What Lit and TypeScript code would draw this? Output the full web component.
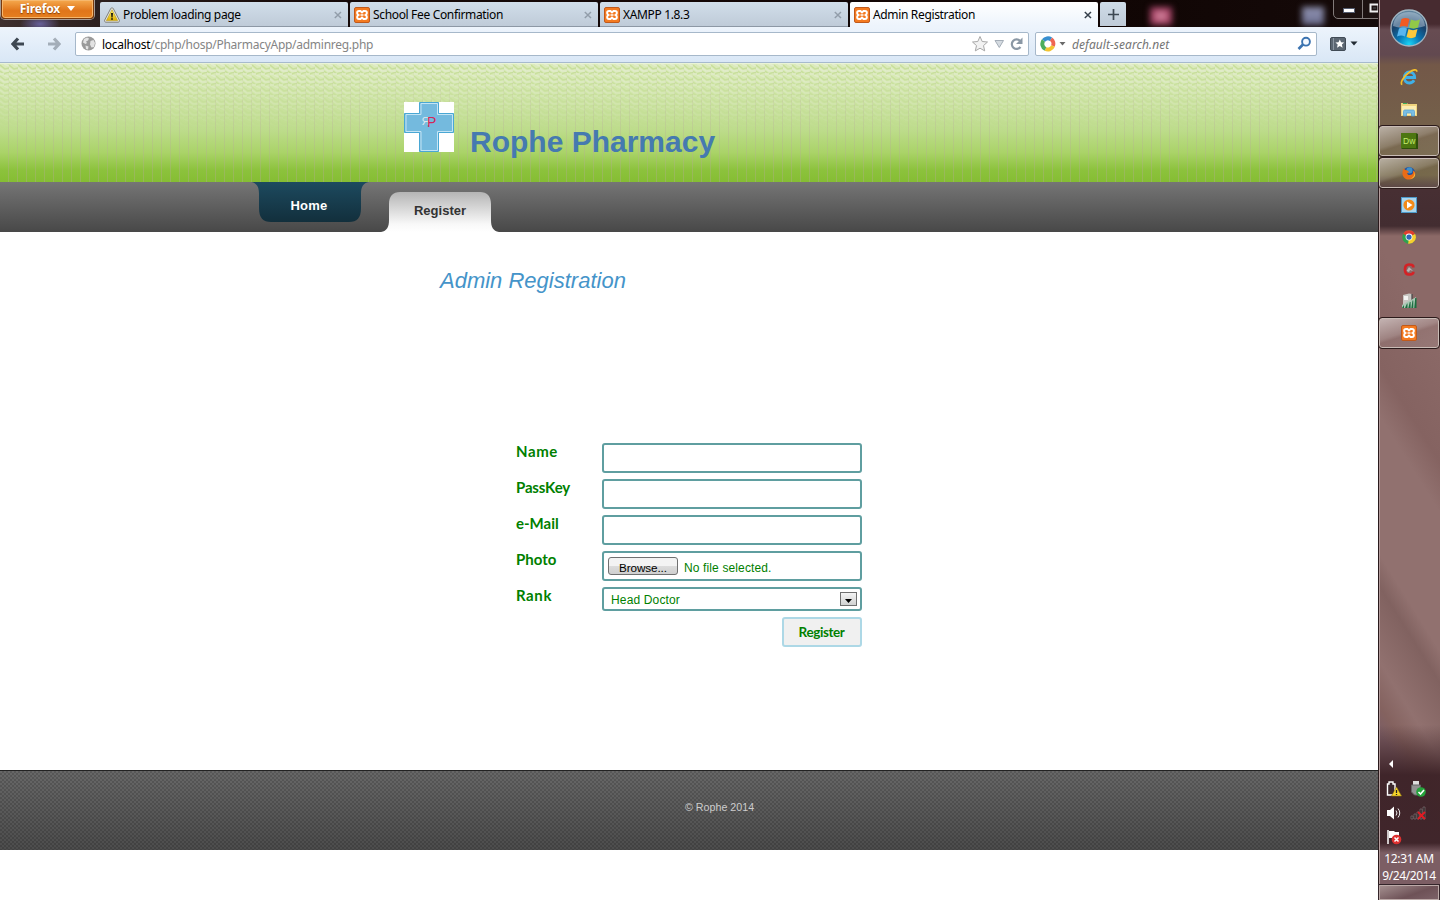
import { LitElement, html, css, svg } from "lit";
import { customElement, property } from "lit/decorators.js";

const xampp = html`<svg width="16" height="16" viewBox="0 0 16 16">
  <rect x=".5" y=".5" width="15" height="15" rx="1.5" fill="#f47a20" stroke="#c05a1c"/>
  <path d="M5 4h1.500L8 5.500 9.500 4H11c1.400 0 1.900.8 1.900 1.900S12 7.600 11.500 8c.5.400 1.400 1 1.400 2.100S12.400 12 11 12H9.500L8 10.500 6.500 12H5c-1.400 0-1.900-.8-1.900-1.900S4 8.400 4.500 8C4 7.600 3.100 7 3.100 5.900S3.600 4 5 4z" fill="none" stroke="#fff" stroke-width="1.900"/>
  <path d="M6.500 8h3" stroke="#fff" stroke-width="1.500"/>
</svg>`;

const warning = html`<svg width="16" height="16" viewBox="0 0 16 16">
  <defs><linearGradient id="wg" x2="0" y2="1"><stop stop-color="#fff27a"/><stop offset="1" stop-color="#dfae00"/></linearGradient></defs>
  <path d="M8 .8c.6 0 1 .3 1.300.8l6 11.500c.5 1-.1 2.100-1.300 2.100H2C.8 15.200.2 14.100.7 13.100l6-11.500C7 1.100 7.400.8 8 .8z" fill="#e4e4e0" stroke="#77776f" stroke-width=".9"/>
  <path d="M8 2.800l5.600 10.800H2.400z" fill="url(#wg)" stroke="#b99b12" stroke-width=".6"/>
  <path d="M7 6h2l-.4 4.400H7.400zM7.100 11.200h1.800v1.600H7.100z" fill="#1a1a10"/>
</svg>`;

@customElement("browser-tab")
class BrowserTab extends LitElement {
  @property() label = "";
  @property() icon = "xampp";
  @property({ type: Boolean, reflect: true }) active = false;
  static styles = css`
    :host { display: flex; align-items: center; box-sizing: border-box; width: 248px; height: 25px;
      padding: 1px 6px 0 4px; background: linear-gradient(#d1deea, #bfcbd8); border-bottom: 1px solid #8d98a5;
      border-radius: 2px 2px 0 0; font: 12px "Noto Sans", sans-serif; color: #000; }
    :host([active]) { background: linear-gradient(#fff, #edf4fc); border-bottom-color: #edf4fc; }
    .label { flex: 1; margin-left: 3px; white-space: nowrap; letter-spacing: -.34px; }
    .close { opacity: .36; display: block; margin-top: 1px; }
    :host([active]) .close { opacity: 1; }
  `;
  render() {
    return html`${this.icon === "warning" ? warning : xampp}
      <span class="label">${this.label}</span>
      <svg class="close" width="8" height="8" viewBox="0 0 8 8"><path d="M.8 1l6.200 6M7 1L.8 7" stroke="#36404c" stroke-width="1.500"/></svg>`;
  }
}

@customElement("browser-chrome")
class BrowserChrome extends LitElement {
  static styles = css`
    :host { display: block; font-family: "Noto Sans", sans-serif; }
    svg { display: block; flex: none; }
    .strip { position: relative; display: flex; height: 27px; overflow: hidden;
      background: radial-gradient(ellipse 20px 10px at 40px 24px, #67609a, transparent),
        linear-gradient(90deg, #3e302f 0, #2c201f 95px, #160a09 300px, #100504 1100px, #150a09); }
    .glow { position: absolute; top: 7px; width: 22px; height: 18px; filter: blur(3px); }
    .pink { left: 1150px; background: radial-gradient(#dc9aae 0, #ab4668 55%, #8a3558); }
    .slate { left: 1302px; background: linear-gradient(#9295b4, #6b6d8e); }
    .firefox { box-sizing: border-box; width: 93px; height: 19px; margin-left: 1px; margin-right: 6px; display: flex;
      align-items: center; justify-content: center; gap: 7px; padding-bottom: 1px; border: 1px solid #7a3a0c; border-top: 0;
      border-radius: 0 0 4px 4px; background: linear-gradient(#f5a94e, #e0751a 60%, #e57f20); color: #fff;
      box-shadow: inset 0 0 0 1px #f6b76c, 0 0 0 1px #a49a94; font-weight: 700; font-size: 12px; letter-spacing: -.15px; text-shadow: 0 1px 1px #8a4208; }
    .tabs { display: flex; gap: 2px; padding-top: 2px; }
    .plus { width: 26px; height: 24px; background: linear-gradient(#cfdce8, #bfcbd8); display: grid; place-items: center; border-radius: 2px 2px 0 0; }
    .controls { position: absolute; left: 1333px; top: -4px; display: flex; border: 1px solid #827b7a; border-radius: 0 0 4px 5px; height: 21px; width: 60px; background: #1d1211; }
    .controls .min { width: 29px; border-right: 1px solid #827b7a; display: grid; place-items: center; padding: 5px 0 0 1px; box-sizing: border-box; }
    .controls .max { padding: 6px 0 0 6px; }
    .bar { box-sizing: border-box; display: flex; align-items: center; height: 36px; padding: 0 0 2px 11px;
      background: linear-gradient(#edf4fc, #d9e7f6); border-bottom: 1px solid #a7bacd; }
    .forward { margin-left: 22px; opacity: .38; }
    .field { box-sizing: border-box; height: 24px; display: flex; align-items: center; background: #fff; border: 1px solid #a6b8ca; border-radius: 2px; font-size: 12px; }
    .url { width: 954px; margin-left: 14px; padding: 0 5px; color: #858585; }
    .url span { flex: 1; margin-left: 6px; padding-top: 1px; letter-spacing: -.27px; }
    .url b { font-weight: 400; color: #000; }
    .search { width: 282px; margin-left: 6px; padding: 0 4px; color: #747474; }
    .search em { flex: 1; margin-left: 6px; padding-top: 1px; letter-spacing: .06px; }
    .drop { margin-left: 3px; }
    .mark { margin-left: 13px; }
    .caret { margin-left: 4px; }
  `;
  render() {
    const arrow = svg`<path d="M7 1.500L2 7l5 5.500M2.500 7H13" fill="none" stroke="#3e4852" stroke-width="3.200"/>`;
    return html`
      <div class="strip">
        <div class="glow pink"></div><div class="glow slate"></div>
        <div class="firefox">Firefox <svg width="8" height="5"><path d="M0 0h8L4 5z" fill="#fff"/></svg></div>
        <div class="tabs">
          <browser-tab label="Problem loading page" icon="warning"></browser-tab>
          <browser-tab label="School Fee Confirmation"></browser-tab>
          <browser-tab label="XAMPP 1.8.3"></browser-tab>
          <browser-tab label="Admin Registration" active></browser-tab>
          <div class="plus"><svg width="11" height="11"><path d="M5.500 0v11M0 5.500h11" stroke="#3d4853" stroke-width="1.700"/></svg></div>
        </div>
        <div class="controls">
          <div class="min"><svg width="12" height="5"><rect x=".5" y=".5" width="11" height="4" fill="#fff" stroke="#555d70"/></svg></div>
          <div class="max"><svg width="12" height="10"><path d="M1.500 1.500h8v7h-8z" fill="none" stroke="#eee" stroke-width="2"/><rect x="4" y="4" width="3" height="2" fill="#333"/></svg></div>
        </div>
      </div>
      <div class="bar">
        <svg width="14" height="14">${arrow}</svg>
        <svg class="forward" width="14" height="14" viewBox="0 0 14 14"><g transform="translate(14 0) scale(-1 1)">${arrow}</g></svg>
        <div class="field url">
          <svg width="15" height="15" viewBox="0 0 15 15"><circle cx="7.500" cy="7.500" r="7" fill="#9a9a9a"/><path d="M3 3l3-1.500 2 1-1 2-2 1 1 1.500-1.500 1L2 6.500zM9.500 5l3-1 1.500 3-1 4-2.500.5L9 8.500zM4.500 9.500l3 1-.5 3-2-.5z" fill="#e3e3e3"/></svg>
          <span><b>localhost</b>/cphp/hosp/PharmacyApp/adminreg.php</span>
          <svg width="52" height="18" viewBox="0 0 52 18">
            <path d="M9 1.500l2.200 5 5.300.5-4 3.600 1.200 5.300L9 13.200l-4.700 2.700 1.200-5.300-4-3.600 5.300-.5z" fill="#f2f2f2" stroke="#a8a8a8"/>
            <path d="M24 5.500h8.500l-4.200 7z" fill="#d5dbe1" stroke="#a4adb7"/>
            <path d="M49.500 12A4.800 4.800 0 1 1 49 5.700" fill="none" stroke="#8b98a5" stroke-width="2.200"/><path d="M51.500 2.500V9H45z" fill="#8b98a5"/>
          </svg>
        </div>
        <div class="field search">
          <svg width="16" height="16" viewBox="0 0 16 16" fill="none" stroke-width="4">
            <path d="M3.500 4.500A5.600 5.600 0 0 1 11 3.200" stroke="#388fd0"/><path d="M11 3.200A5.600 5.600 0 0 1 13 10" stroke="#ef6654"/>
            <path d="M13 10A5.600 5.600 0 0 1 5.500 13" stroke="#f3c431"/><path d="M5.500 13A5.600 5.600 0 0 1 3.500 4.500" stroke="#4cae5b"/></svg>
          <svg class="drop" width="7" height="4"><path d="M.5 0h6L3.500 3.500z" fill="#6a6a6a"/></svg>
          <em>default-search.net</em>
          <svg width="15" height="15" viewBox="0 0 15 15"><circle cx="9" cy="5.700" r="3.900" fill="#f4f9ff" stroke="#3b73b0" stroke-width="1.900"/><path d="M6 8.500L1.500 13" stroke="#3b73b0" stroke-width="2.600"/></svg>
        </div>
        <svg class="mark" width="16" height="14" viewBox="0 0 16 14"><rect x=".5" y=".5" width="15" height="13" rx="1.500" fill="#5b6672" stroke="#414b56"/><path d="M3.500 1v12" stroke="#8b96a2"/><path d="M9.800 2.500l1.300 2.800 3.100.3-2.300 2 .7 3.100-2.800-1.600L7 10.700l.7-3.100-2.300-2 3.100-.3z" fill="#fff"/></svg>
        <svg class="caret" width="8" height="5"><path d="M.5.500h7L4 4.500z" fill="#222b33"/></svg>
      </div>`;
  }
}

@customElement("pharmacy-page")
class PharmacyPage extends LitElement {
  static styles = css`
    :host { display: flex; flex-direction: column; flex: 1; background: #fff; font-family: "Liberation Sans", Arial, sans-serif; }
    svg { display: block; flex: none; }
    header { position: relative; box-sizing: border-box; height: 119px; padding: 38px 0 0 404px; display: flex; align-items: flex-start;
      border-top: 1px solid #eaf4d6;
      background: linear-gradient(#dcebbc, #d5e8b1 16%, #cae29f 36%, #bddc8b 56%, #aad368 75%, #8cc23c 90%, #85bd33); }
    .texture { position: absolute; inset: 0; }
    header > .logo { position: relative; }
    h1 { position: relative; margin: 23px 0 0 16px; font-size: 30px; line-height: 34px; color: #457ab0; white-space: nowrap; }
    nav { height: 50px; display: flex; background: linear-gradient(#757575, #484848); }
    .tab { width: 118px; height: 40px; display: grid; font: 700 13px/1 "Liberation Sans", Arial, sans-serif; }
    .tab > * { grid-area: 1 / 1; }
    .tab span { align-self: center; justify-self: center; }
    .home { margin-left: 251px; color: #fff; }
    .home span { padding: 6px 2px 0 0; letter-spacing: .2px; }
    .register { margin: 10px 0 0 12px; color: #333; }
    .register span { padding-bottom: 4px; }
    main { height: 538px; box-sizing: border-box; padding: 36px 0 0 440px; }
    h2 { margin: 0; font: italic 400 22px/26px "Liberation Sans", Arial, sans-serif; color: #4594c9; }
    form { display: grid; grid-template-columns: 86px 260px; row-gap: 6px; margin: 149px 0 0 76px; width: 346px; }
    label { font: 700 15px/16px Lato, sans-serif; color: #008000; }
    .wide { letter-spacing: .6px; }
    .tight { letter-spacing: -.15px; }
    .box { box-sizing: border-box; height: 30px; border: 2px solid #5f9ea0; border-radius: 3px; background: #fff; display: flex; align-items: center;
      font: 12px "Liberation Sans", Arial, sans-serif; color: #008000; }
    input.box { width: 260px; padding: 0 6px; outline: 0; }
    .browse { box-sizing: border-box; width: 70px; height: 18px; margin: 0 6px 0 4px; border: 1px solid #707070; border-radius: 3px;
      background: linear-gradient(#f3f3f3 50%, #dcdcdc 50%, #cfcfcf); color: #000; font-size: 11.700px; line-height: 20px; text-align: center; letter-spacing: -.1px; }
    .file { padding-top: 4px; letter-spacing: .13px; }
    .select { height: 24px; padding: 0 3px 0 7px; justify-content: space-between; letter-spacing: .15px; }
    .choice { padding-top: 2px; }
    .drop { box-sizing: border-box; width: 17px; height: 14px; border: 1px solid #707070; background: linear-gradient(#f4f4f4, #d2d2d2); display: grid; place-items: center; padding-top: 4px; }
    button { grid-column: 2; justify-self: end; width: 80px; height: 30px; padding: 0 1px 0 0; border: 2px solid #add8e6; border-radius: 3px; background: #f0f0f0;
      color: #008000; font: 700 13.500px Lato, sans-serif; letter-spacing: -.42px; }
    footer { box-sizing: border-box; height: 80px; border-top: 1px solid #222; padding: 30px 0 0 685px; color: #ccc; font-size: 10.700px; line-height: 13px;
      background: conic-gradient(rgba(0,0,0,.15) 25%, transparent 0 50%, rgba(0,0,0,.15) 0 75%, transparent 0) 0 0 / 4px 4px,
        linear-gradient(#676767, #4c4c4c); }
  `;
  render() {
    return html`
      <header>
        <svg class="texture" width="1378" height="118">
          <defs>
            <pattern id="lines" width="9" height="118" patternUnits="userSpaceOnUse"><path d="M8.500 0v118" stroke="#b7a99c"/></pattern>
            <pattern id="waves" width="9" height="11" patternUnits="userSpaceOnUse"><path d="M0 1l5 4 4-1M0 7l4 3 5-2" fill="none" stroke="#b9d584" stroke-width="1.500"/><path d="M0 4l4 3h5M4 0l5 2M0 10h4" fill="none" stroke="#e9eedd" stroke-width="1.500"/></pattern>
            <linearGradient id="fade" x2="0" y2="1"><stop stop-color="#fff" stop-opacity=".6"/><stop offset=".25" stop-color="#fff" stop-opacity=".3"/><stop offset=".55" stop-color="#fff" stop-opacity="0"/></linearGradient>
            <linearGradient id="rise" x2="0" y2="1"><stop offset=".05" stop-color="#fff" stop-opacity=".04"/><stop offset=".5" stop-color="#fff" stop-opacity=".26"/><stop offset="1" stop-color="#fff" stop-opacity=".36"/></linearGradient>
            <mask id="top"><rect width="1378" height="118" fill="url(#fade)"/></mask>
            <mask id="low"><rect width="1378" height="118" fill="url(#rise)"/></mask>
          </defs>
          <rect width="1378" height="118" fill="url(#waves)" mask="url(#top)"/>
          <rect width="1378" height="118" fill="url(#lines)" mask="url(#low)"/>
        </svg>
        <svg class="logo" width="50" height="50" viewBox="0 0 50 50">
          <rect width="50" height="50" fill="#fff"/>
          <path d="M15.500.5h19v11h15v19h-15v19h-19v-19H.5v-19h15z" fill="#74bade" stroke="#49a7d4"/>
          <path d="M17 1.500h16.500v11h15v17h-15v19H17v-19H2v-17h15z" fill="none" stroke="#c4e4f4"/>
          <g font-family="Liberation Sans"><text transform="translate(25.500 23) scale(-1 1)" font-size="11" fill="#dde6f0">R</text><text x="23" y="24.500" font-size="14" fill="#d32658">P</text></g>
        </svg>
        <h1>Rophe Pharmacy</h1>
      </header>
      <nav>
        <div class="tab home">
          <svg width="118" height="40"><defs><linearGradient id="hg" x2="0" y2="1"><stop stop-color="#1d4a5f"/><stop offset="1" stop-color="#122f3c"/></linearGradient></defs>
            <path d="M0 0h118c-6 1-8 5-8 12v14c0 10-4 14-12 14H20C12 40 8 36 8 26V12C8 5 6 1 0 0z" fill="url(#hg)"/></svg>
          <span>Home</span>
        </div>
        <div class="tab register">
          <svg width="118" height="40"><defs><linearGradient id="rg" x2="0" y2="1"><stop stop-color="#b5b5b5"/><stop offset=".8" stop-color="#f8f8f8"/><stop offset="1" stop-color="#fff"/></linearGradient></defs>
            <path d="M0 40c6-1 8-5 8-12V12C8 4 12 0 19 0h80c7 0 11 4 11 12v16c0 7 2 11 8 12z" fill="url(#rg)"/></svg>
          <span>Register</span>
        </div>
      </nav>
      <main>
        <h2>Admin Registration</h2>
        <form @submit=${(e: Event) => e.preventDefault()}>
          <label class="wide">Name</label><input class="box">
          <label class="tight">PassKey</label><input class="box" type="password">
          <label>e-Mail</label><input class="box">
          <label>Photo</label><div class="box"><span class="browse">Browse...</span><span class="file">No file selected.</span></div>
          <label class="wide">Rank</label><div class="box select"><span class="choice">Head Doctor</span><span class="drop"><svg width="7" height="4"><path d="M0 0h7L3.500 4z"/></svg></span></div>
          <button>Register</button>
        </form>
      </main>
      <footer>© Rophe 2014</footer>`;
  }
}

const orb = html`<svg width="40" height="40" viewBox="0 0 40 40">
  <defs><radialGradient id="ob" cy=".95" r=".9"><stop stop-color="#19d5f6"/><stop offset=".35" stop-color="#0876b4"/><stop offset=".7" stop-color="#1a4068"/><stop offset="1" stop-color="#5f839d"/></radialGradient></defs>
  <circle cx="20" cy="20" r="18" fill="url(#ob)" stroke="#a0b4c0" stroke-width="1.300"/>
  <path d="M4 18C5 8 12 4 20 4s15 4 16 14c-8 3-24 3-32 0z" fill="#d9e8f2" opacity=".42"/>
  <path d="M12.500 11c3-1.500 5-1.500 8 0l-2 8c-3-1.500-5-1.500-8 0z" fill="#f05a24"/><path d="M22 11.500c3 1.500 6 1.500 9 0l-2 8c-3 1.500-6 1.500-9 0z" fill="#91c948"/>
  <path d="M10 20.500c3-1.500 5-1.500 8 0l-2 8c-3-1.500-5-1.500-8 0z" fill="#59b5ee"/><path d="M19.500 21c3 1.500 6 1.500 9 0l-2 8c-3 1.500-6 1.500-9 0z" fill="#fcc83c"/>
</svg>`;
const ie = html`<svg width="18" height="18" viewBox="0 0 18 18"><path d="M4.500 9.500h10.200C14.700 6.500 12.700 4 9.500 4S4.300 6.400 4.300 9.600s2 5.400 5 5.400c2.200 0 3.800-1 4.800-2.700" fill="none" stroke="#3fb0e8" stroke-width="2.800"/><path d="M2.300 16.500C-.5 16 3 8.500 9 4.500c4-2.800 8-3.800 7.800-.8" fill="none" stroke="#f6bf27" stroke-width="1.700"/></svg>`;
const folder = html`<svg width="16" height="15" viewBox="0 0 16 15"><path d="M0 1h6l1 1h9v12H0z" fill="#eed27c"/><path d="M1 4h14v9H1z" fill="#fbecb0"/><path d="M2 1.500h4" stroke="#3bae5b"/><path d="M2.500 14V9.500c0-1 .5-1.500 1.500-1.500h8c1 0 1.500.5 1.500 1.500V14h-3v-3h-5v3z" fill="#79bee5" stroke="#5aa3d0" stroke-width=".8"/></svg>`;
const dw = html`<svg width="17" height="16" viewBox="0 0 17 16"><path d="M0 0h15l2 1v15H1l-1-1z" fill="#2f500b"/><rect width="15" height="15" fill="#4c7610"/><text x="2" y="11" font-family="Liberation Sans" font-size="8.500" fill="#c4ec6e">Dw</text></svg>`;
const fox = html`<svg width="14" height="14" viewBox="0 0 16 16"><circle cx="8" cy="8" r="7" fill="#214f9c"/><circle cx="8.500" cy="5" r="3.500" fill="#3f8fc9"/><path d="M2 3l2 1.500C6 5 7 5.500 8 7l-2 1c0 2 2 3 4 2 2 0 3-2 2.500-5C15 6 15.500 8 15 10c-1 4-4 5.500-7 5.500-4 0-7-3-7.500-6.500C.3 6.500 1 4.500 2 3z" fill="#e96c17"/><path d="M14 5c1.500 4-1 9-5 9.500 4 .5 6-2 6-5z" fill="#f9c035"/></svg>`;
const wmp = html`<svg width="16" height="16" viewBox="0 0 16 16"><rect x=".5" y=".5" width="15" height="15" fill="#a9d6ef" stroke="#4d9bcb"/><circle cx="8" cy="8" r="5.600" fill="#f28a19"/><path d="M6 4.500v7L11.500 8z" fill="#fff"/></svg>`;
const chrome = html`<svg width="14" height="14" viewBox="0 0 16 16"><circle cx="8" cy="8" r="7.700" fill="#2ea34e"/><path d="M8 8L1.300 4.200A7.700 7.700 0 0 1 15 4.700z" fill="#df3e2f"/><path d="M8 8l7-3.300A7.700 7.700 0 0 1 7 15.700z" fill="#f8cf2e"/><circle cx="8" cy="8" r="3.900" fill="#fff"/><circle cx="8" cy="8" r="3" fill="#2f67b8"/></svg>`;
const letterC = html`<svg width="14" height="15" viewBox="0 0 14 15"><path d="M11.200 5.500V4C10.500 2.600 9 2.500 7 2.500c-3 0-4 1.500-4 5s1 5 4 5c2 0 3.500 0 4.200-1.500V9.800" fill="none" stroke="#d42226" stroke-width="2.700"/><path d="M4.500 9l2.500-4 4 4-3-1-1 2z" fill="#b8b5b5"/></svg>`;
const chart = html`<svg width="16" height="16" viewBox="0 0 16 16"><path d="M2 2l6-1.500 3 .5v9L2 12z" fill="#c9c7c3"/><path d="M3 3h4v4H3z" fill="#f4f4f2"/><path d="M11 1v8" stroke="#444" stroke-width="1.200"/><path d="M1 12l5-3 4-2 5-3v11H1z" fill="#a9c8b4"/><path d="M1 15l2-3v3zM4 15l2-4.500h.5V15zM7.300 15l1.500-6h.8v6zM10.300 15l1.200-7.500h.8V15zM13.200 15l1-10h1.300v10z" fill="#1d6e40"/></svg>`;

@customElement("windows-taskbar")
class WindowsTaskbar extends LitElement {
  static styles = css`
    :host { box-sizing: border-box; display: flex; flex-direction: column; width: 62px; height: 900px; border-left: 1px solid #2a1a1c;
      box-shadow: inset 1px 0 #b39c9c; font-family: "Noto Sans", sans-serif; color: #fff;
      background: linear-gradient(rgba(0,0,0,0) 225px, rgba(0,0,0,0) 725px, rgba(58,32,37,.5) 752px, rgba(58,32,37,.92) 775px, rgba(58,32,37,.9) 843px, rgba(0,0,0,0) 853px),
        linear-gradient(#472b30 0, #472b30 24px, #674c52 30px, #624950 55px, #735848 65px, #74604a 125px, #6b5c3c 175px, #472f33 190px, #432d31 226px, transparent 236px),
        linear-gradient(238deg, #8b6967 0 180px, #856361 245px, #91716f 272px, #91716f 345px, #816260 362px, #91716f 402px, #84625f 425px, #7c5e64 440px); }
    svg { display: block; }
    .start { height: 61px; box-sizing: border-box; padding: 8px 0 0 10px; }
    .slot { box-sizing: border-box; height: 32px; width: 60px; display: grid; place-items: center; }
    .running { height: 30px; margin: 1px 0; border: 1px solid #c9bcb6; border-radius: 3px; outline: 1px solid #2b1a1a;
      background: linear-gradient(162deg, rgba(255,255,255,.5), rgba(255,255,255,.2) 45%, rgba(255,255,255,.07) 53%, rgba(255,255,255,.1)); }
    .tray { margin-top: auto; height: 142px; display: grid; grid-template: 19px 24px 24px 24px 18px 17px 16px / 30px 17px 13px;
      justify-items: center; align-items: center; }
    .more { place-self: start; margin: 2px 0 0 10px; }
    .first { grid-column: 1; }
    .net { grid-column: 2; }
    .time { grid-column: 1 / 4; font-size: 12px; line-height: 17px; letter-spacing: -.38px; white-space: nowrap; align-self: end; }
    .desk { grid-column: 1 / 4; box-sizing: border-box; width: 60px; height: 15px; border: 1px solid #bcaaa8; outline: 1px solid #34252a; align-self: end;
      background: linear-gradient(160deg, #a48f8f, #6e5257 60%, #7c6167); }
  `;
  render() {
    const badge = svg`<path d="M10.500 6l5 9h-10z" fill="#f8d729" stroke="#937a15" stroke-width=".6"/><path d="M10.500 9v3m0 1v1" stroke="#222" stroke-width="1.300"/>`;
    return html`
      <div class="start">${orb}</div>
      <div class="slot">${ie}</div>
      <div class="slot">${folder}</div>
      <div class="slot running">${dw}</div>
      <div class="slot running">${fox}</div>
      <div class="slot">${wmp}</div>
      <div class="slot">${chrome}</div>
      <div class="slot">${letterC}</div>
      <div class="slot">${chart}</div>
      <div class="slot running">${xampp}</div>
      <div class="tray">
        <svg class="more" width="4" height="8"><path d="M4 0v8L0 4z" fill="#fff"/></svg>
        <svg class="first" width="16" height="16"><path d="M3 3V1h4v2h2v11H1.500V3z" fill="#3d292d" stroke="#fff" stroke-width="1.400"/>${badge}</svg>
        <svg class="net" width="16" height="16"><path d="M3 0h6v5H3z" fill="#ddd"/><path d="M1.500 4h9v7l-3 3h-3l-3-3z" fill="#929292" stroke="#666"/><circle cx="11" cy="11" r="4.800" fill="#25a23b"/><path d="M8.500 11l2 2 3.500-4" fill="none" stroke="#fff" stroke-width="1.600"/></svg>
        <svg class="first" width="16" height="14"><path d="M1 4h3l4-3.500v13L4 10H1z" fill="#fff"/><path d="M10 4.500q2 2.500 0 5M12 2.500q3.500 4.500 0 9" fill="none" stroke="#eee"/></svg>
        <svg class="net" width="16" height="14"><path d="M1 10h2v3H1zM4 8h2v5H4zM7 6h2v7H7zM10 3h2v10h-2zM13 1h2v12h-2z" fill="#272020" stroke="#9b8b8c" stroke-width=".5"/><path d="M8 6l7 7M15 6l-7 7" stroke="#e21a22" stroke-width="1.800"/></svg>
        <svg class="first" width="16" height="16"><path d="M2 1v14" stroke="#fff" stroke-width="1.500"/><path d="M3 2h5l1 1h4v7H8L7 9H3z" fill="#fff"/><circle cx="10.500" cy="10.500" r="4.800" fill="#dd3030"/><path d="M8.500 8.500l4 4m0-4l-4 4" stroke="#fff" stroke-width="1.500"/></svg>
        <span class="time">12:31 AM</span>
        <span class="time">9/24/2014</span>
        <div class="desk"></div>
      </div>`;
  }
}

@customElement("app-root")
class AppRoot extends LitElement {
  static styles = css`
    :host { display: flex; width: 1440px; height: 900px; overflow: hidden; background: #fff; }
    .window { width: 1378px; display: flex; flex-direction: column; overflow: hidden; }
  `;
  render() {
    return html`<div class="window"><browser-chrome></browser-chrome><pharmacy-page></pharmacy-page></div><windows-taskbar></windows-taskbar>`;
  }
}
